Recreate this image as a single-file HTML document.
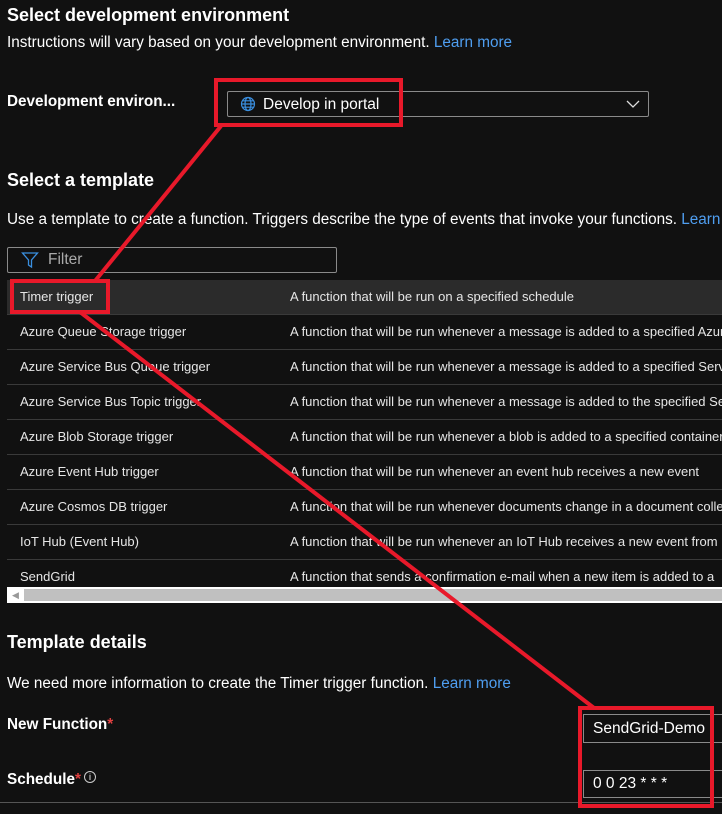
<!DOCTYPE html>
<html><head><style>
*{margin:0;padding:0;box-sizing:border-box}
html,body{width:722px;height:814px;overflow:hidden}
body{background:#111;color:#fff;font-family:"Segoe UI","Liberation Sans",sans-serif;font-size:15.3px;position:relative}
.a{position:absolute;white-space:nowrap}
.h{font-weight:bold;font-size:18px}
.b{font-weight:bold;font-size:15.3px}
.l{color:#4f9ef0}
.row{position:absolute;left:7px;width:715px;height:35px;border-bottom:1px solid #3a3a3a;font-size:13px;color:#e6e6e6;overflow:hidden;white-space:nowrap}
.row span{position:absolute;top:9px;white-space:nowrap}
.row .n{left:13px}.row .d{left:283px}
.st{color:#e04040}
</style></head><body>
<div class="a h" style="left:7px;top:5px">Select development environment</div>
<div class="a" style="left:7px;top:34px">Instructions will vary based on your development environment. <span class="l">Learn more</span></div>
<div class="a b" style="left:7px;top:93px">Development environ...</div>
<div class="a" style="left:227px;top:91px;width:422px;height:26px;border:1px solid #8a8a8a;border-radius:2px"></div>
<svg class="a" style="left:240px;top:96px" width="16" height="16" viewBox="0 0 16 16" fill="none" stroke="#3a8fe0" stroke-width="1.2"><circle cx="8" cy="8" r="6.5"/><ellipse cx="8" cy="8" rx="3" ry="6.5"/><path d="M1.5 8h13M2.5 4.8h11M2.5 11.2h11"/></svg>
<div class="a" style="left:263px;top:96px;font-size:15.5px">Develop in portal</div>
<svg class="a" style="left:626px;top:99px" width="14" height="10"><path d="M1 2l6 6 6-6" stroke="#ddd" fill="none" stroke-width="1.3"/></svg>
<div class="a h" style="left:7px;top:170px">Select a template</div>
<div class="a" style="left:7px;top:211px;width:715px;overflow:hidden">Use a template to create a function. Triggers describe the type of events that invoke your functions. <span class="l">Learn more</span></div>
<div class="a" style="left:7px;top:247px;width:330px;height:26px;border:1px solid #8a8a8a;border-radius:2px"></div>
<svg class="a" style="left:21px;top:251px" width="18" height="18" viewBox="0 0 18 18"><path d="M1.5 2h15l-6 7v7l-3-2V9z" stroke="#3a8fe0" fill="none" stroke-width="1.3"/></svg>
<div class="a" style="left:48px;top:251px;color:#aaa;font-size:15.5px">Filter</div>
<div class="row" style="top:280px;background:#2b2b2b"><span class="n">Timer trigger</span><span class="d">A function that will be run on a specified schedule</span></div>
<div class="row" style="top:315px"><span class="n">Azure Queue Storage trigger</span><span class="d">A function that will be run whenever a message is added to a specified Azure Storage queue</span></div>
<div class="row" style="top:350px"><span class="n">Azure Service Bus Queue trigger</span><span class="d">A function that will be run whenever a message is added to a specified Service Bus queue</span></div>
<div class="row" style="top:385px"><span class="n">Azure Service Bus Topic trigger</span><span class="d">A function that will be run whenever a message is added to the specified Service Bus topic</span></div>
<div class="row" style="top:420px"><span class="n">Azure Blob Storage trigger</span><span class="d">A function that will be run whenever a blob is added to a specified container</span></div>
<div class="row" style="top:455px"><span class="n">Azure Event Hub trigger</span><span class="d">A function that will be run whenever an event hub receives a new event</span></div>
<div class="row" style="top:490px"><span class="n">Azure Cosmos DB trigger</span><span class="d">A function that will be run whenever documents change in a document collection</span></div>
<div class="row" style="top:525px"><span class="n">IoT Hub (Event Hub)</span><span class="d">A function that will be run whenever an IoT Hub receives a new event from</span></div>
<div class="row" style="top:560px;border:none;height:27px"><span class="n" style="top:9px">SendGrid</span><span class="d" style="top:9px">A function that sends a confirmation e-mail when a new item is added to a</span></div>
<div class="a" style="left:7px;top:587px;width:715px;height:16px;background:#fff"></div>
<div class="a" style="left:24px;top:589px;width:698px;height:12px;background:#c0c0c0"></div>
<div class="a" style="left:12px;top:590px;color:#999;font-size:9px">◀</div>
<div class="a h" style="left:7px;top:632px">Template details</div>
<div class="a" style="left:7px;top:675px">We need more information to create the Timer trigger function. <span class="l">Learn more</span></div>
<div class="a b" style="left:7px;top:716px">New Function<span class="st">*</span></div>
<div class="a b" style="left:7px;top:771px">Schedule<span class="st">*</span><span style="font-weight:normal;border:1px solid #ccc;border-radius:50%;display:inline-block;width:12px;height:12px;line-height:10px;text-align:center;font-size:9px;margin-left:3px;vertical-align:4px">i</span></div>
<div class="a" style="left:583px;top:714px;width:139px;height:29px;border:1px solid #8a8a8a;border-right:none;padding:5px 0 0 9px;font-size:15.5px">SendGrid-Demo</div>
<div class="a" style="left:583px;top:770px;width:139px;height:28px;border:1px solid #8a8a8a;border-right:none;padding:4px 0 0 9px;font-size:15.5px">0 0 23 * * *</div>
<div class="a" style="left:0;top:802px;width:722px;height:1px;background:#555"></div>
<svg class="a" style="left:0;top:0" width="722" height="814">
<g stroke="#e8192a" fill="none" stroke-width="4">
<rect x="216" y="80" width="185" height="45"/>
<rect x="12" y="281" width="96" height="31"/>
<rect x="580" y="708" width="132" height="98"/>
<path d="M221 126L95 281"/>
<path d="M80 312L594 708"/>
</g></svg>
</body></html>
